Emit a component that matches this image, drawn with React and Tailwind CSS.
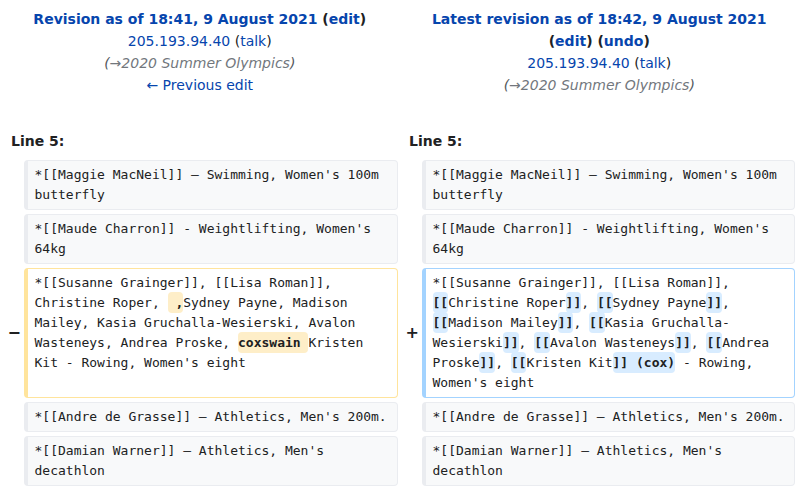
const sans = "font-['DejaVu_Sans',sans-serif]";
const mono =
  "font-['DejaVu_Sans_Mono',monospace] text-[13px] leading-[20px] text-[#202122] whitespace-pre-wrap break-words";

const Del = ({ children }) => (
  <span className="font-bold rounded-[4px] bg-[#feeec8] py-[3px]">{children}</span>
);

const Ins = ({ children }) => (
  <span className="font-bold rounded-[4px] bg-[#d8ecff] py-[3px]">{children}</span>
);

const Context = ({ children }) => (
  <div className={`${mono} rounded-[4px] border border-l-4 border-[#eaecf0] bg-[#f8f9fa] px-[6.5px] py-[4px]`}>
    {children}
  </div>
);

const Marker = ({ children }) => (
  <div className={`${sans} flex items-center justify-end pr-[3px] text-[16px] font-bold text-[#202122]`}>
    {children}
  </div>
);

const Link = ({ children, className = "" }) => (
  <a href="#" className={`text-[#0645ad] ${className}`}>
    {children}
  </a>
);

const Summary = () => (
  <div className="italic text-[#54595d]">
    (<span className="text-[#72777d]">→2020 Summer Olympics</span>)
  </div>
);

const App = () => {
  return (
    <div className={`${sans} bg-white w-[799px] h-[490px] overflow-hidden text-[#202122]`}>
      {/* revision headers */}
      <div className="grid grid-cols-2 pt-[8px] text-[14px] leading-[22px] text-center">
        <div>
          <div className="font-bold">
            <Link>Revision as of 18:41, 9 August 2021</Link> (<Link>edit</Link>)
          </div>
          <div>
            <Link>205.193.94.40</Link> (<Link>talk</Link>)
          </div>
          <Summary />
          <div>
            <Link>← Previous edit</Link>
          </div>
        </div>
        <div>
          <div className="font-bold">
            <Link>Latest revision as of 18:42, 9 August 2021</Link>
          </div>
          <div className="font-bold">
            (<Link>edit</Link>) (<Link>undo</Link>)
          </div>
          <div>
            <Link>205.193.94.40</Link> (<Link>talk</Link>)
          </div>
          <Summary />
        </div>
      </div>

      {/* line numbers */}
      <div className="grid grid-cols-[398px_1fr] mt-[34px] text-[14px] leading-[22px] font-bold">
        <div className="pl-[11px]">Line 5:</div>
        <div className="pl-[11px]">Line 5:</div>
      </div>

      {/* diff rows */}
      <div className="grid grid-cols-[24px_374px_24px_373px] gap-y-[4px] mt-[8px]">
        <div />
        <Context>*[[Maggie MacNeil]] – Swimming, Women's 100m butterfly</Context>
        <div />
        <Context>*[[Maggie MacNeil]] – Swimming, Women's 100m butterfly</Context>

        <div />
        <Context>*[[Maude Charron]] - Weightlifting, Women's 64kg</Context>
        <div />
        <Context>*[[Maude Charron]] - Weightlifting, Women's 64kg</Context>

        <Marker>−</Marker>
        <div className={`${mono} rounded-[4px] border border-l-4 border-[#ffe49c] bg-white px-[6.5px] py-[4px]`}>
          *[[Susanne Grainger]], [[Lisa Roman]], Christine Roper, <Del> ,</Del>Sydney Payne, Madison Mailey,
          Kasia Gruchalla-Wesierski, Avalon Wasteneys, Andrea Proske, <Del>coxswain </Del>Kristen Kit - Rowing,
          Women's eight
        </div>
        <Marker>+</Marker>
        <div className={`${mono} rounded-[4px] border border-l-4 border-[#a3d3ff] bg-white px-[6.5px] py-[4px]`}>
          *[[Susanne Grainger]], [[Lisa Roman]], <Ins>[[</Ins>Christine Roper<Ins>]]</Ins>, <Ins>[[</Ins>Sydney
          Payne<Ins>]]</Ins>, <Ins>[[</Ins>Madison Mailey<Ins>]]</Ins>, <Ins>[[</Ins>Kasia Gruchalla-Wesierski
          <Ins>]]</Ins>, <Ins>[[</Ins>Avalon Wasteneys<Ins>]]</Ins>, <Ins>[[</Ins>Andrea Proske<Ins>]]</Ins>,{" "}
          <Ins>[[</Ins>Kristen Kit<Ins>]] (cox)</Ins> - Rowing, Women's eight
        </div>

        <div />
        <Context>*[[Andre de Grasse]] – Athletics, Men's 200m.</Context>
        <div />
        <Context>*[[Andre de Grasse]] – Athletics, Men's 200m.</Context>

        <div />
        <Context>*[[Damian Warner]] – Athletics, Men's decathlon</Context>
        <div />
        <Context>*[[Damian Warner]] – Athletics, Men's decathlon</Context>
      </div>
    </div>
  );
};

export default App;
